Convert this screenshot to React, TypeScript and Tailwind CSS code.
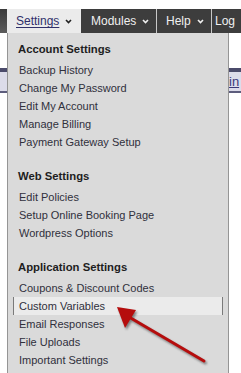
import React from "react";

const Chevron = ({ color }: { color: string }) => (
  <svg width="7" height="5" viewBox="0 0 7 5" className="ml-[6px] mt-[1px]">
    <path d="M1 1 L3.5 3.5 L6 1" fill="none" stroke={color} strokeWidth="1.6" />
  </svg>
);

type Section = { title: string; items: string[] };

const sections: Section[] = [
  {
    title: "Account Settings",
    items: ["Backup History", "Change My Password", "Edit My Account", "Manage Billing", "Payment Gateway Setup"],
  },
  {
    title: "Web Settings",
    items: ["Edit Policies", "Setup Online Booking Page", "Wordpress Options"],
  },
  {
    title: "Application Settings",
    items: ["Coupons & Discount Codes", "Custom Variables", "Email Responses", "File Uploads", "Important Settings"],
  },
];

export default function App() {
  return (
    <div
      className="relative w-[241px] h-[373px] overflow-hidden bg-white"
      style={{ fontFamily: '"Liberation Sans", Arial, sans-serif' }}
    >
      <div className="h-[9px]" />
      <nav className="flex h-[24px] text-[12px]">
        <div className="w-[7px] bg-gradient-to-b from-[#3a3a3a] to-[#5c5c5c]" />
        <div className="w-[74px] bg-[#ebebeb] pl-[9px] flex items-center">
          <span className="text-[#30306a] underline underline-offset-2">Settings</span>
          <Chevron color="#222" />
        </div>
        <div className="w-[75px] bg-[#3d3d3d] pl-[10px] flex items-center text-[#f0f0f0]">
          <span>Modules</span>
          <Chevron color="#f0f0f0" />
        </div>
        <div className="w-px bg-[#c8c8c8]" />
        <div className="w-[54px] bg-[#3d3d3d] pl-[9px] flex items-center text-[#f0f0f0]">
          <span>Help</span>
          <Chevron color="#f0f0f0" />
        </div>
        <div className="w-px bg-[#c8c8c8]" />
        <div className="flex-1 bg-[#3d3d3d] pl-[3px] flex items-center text-[#f0f0f0] whitespace-nowrap overflow-hidden">
          <span>Log</span>
        </div>
      </nav>

      <div className="mt-[35px] h-[25px] border-t-4 border-b-2 border-t-[#4b4b6b] border-b-[#5d5d7d] bg-[#dcdcea] flex items-center pl-[229px] whitespace-nowrap overflow-hidden">
        <span className="text-[13px] text-[#3a3a7a] underline">in</span>
      </div>

      <div className="absolute top-[33px] left-[7px] w-[222px] h-[345px] bg-[#dadada] border-x border-[#959595] pt-[7px]">
        {sections.map((s, i) => (
          <div key={s.title} className={i > 0 ? "mt-[16px]" : ""}>
            <div className="h-[18px] mb-[3px] pl-[10px] flex items-center font-bold text-[11.3px] text-[#1e1e1e]">
              {s.title}
            </div>
            {s.items.map((it) => {
              const active = it === "Custom Variables";
              return (
                <div
                  key={it}
                  className={
                    "mx-[5px] h-[18px] pl-[5px] flex items-center text-[11px] text-[#30303c] border-x " +
                    (active ? "bg-[#ebebeb] border-[#7a7a7a]" : "border-transparent")
                  }
                >
                  {it}
                </div>
              );
            })}
          </div>
        ))}
      </div>

      <svg className="absolute inset-0 pointer-events-none" width="241" height="373" viewBox="0 0 241 373">
        <defs>
          <filter id="sh" x="-20%" y="-20%" width="140%" height="140%">
            <feGaussianBlur stdDeviation="1.2" />
          </filter>
        </defs>
        <g transform="translate(1.5,2)" filter="url(#sh)" opacity="0.55">
          <line x1="204" y1="361" x2="129" y2="317" stroke="#333" strokeWidth="3" strokeLinecap="round" />
          <polygon points="117,307 136,310 125,328" fill="#333" />
        </g>
        <line x1="204" y1="361" x2="129" y2="317" stroke="#b50d0d" strokeWidth="3" strokeLinecap="round" />
        <polygon points="117,307 136,310 125,328" fill="#b50d0d" />
      </svg>
    </div>
  );
}
